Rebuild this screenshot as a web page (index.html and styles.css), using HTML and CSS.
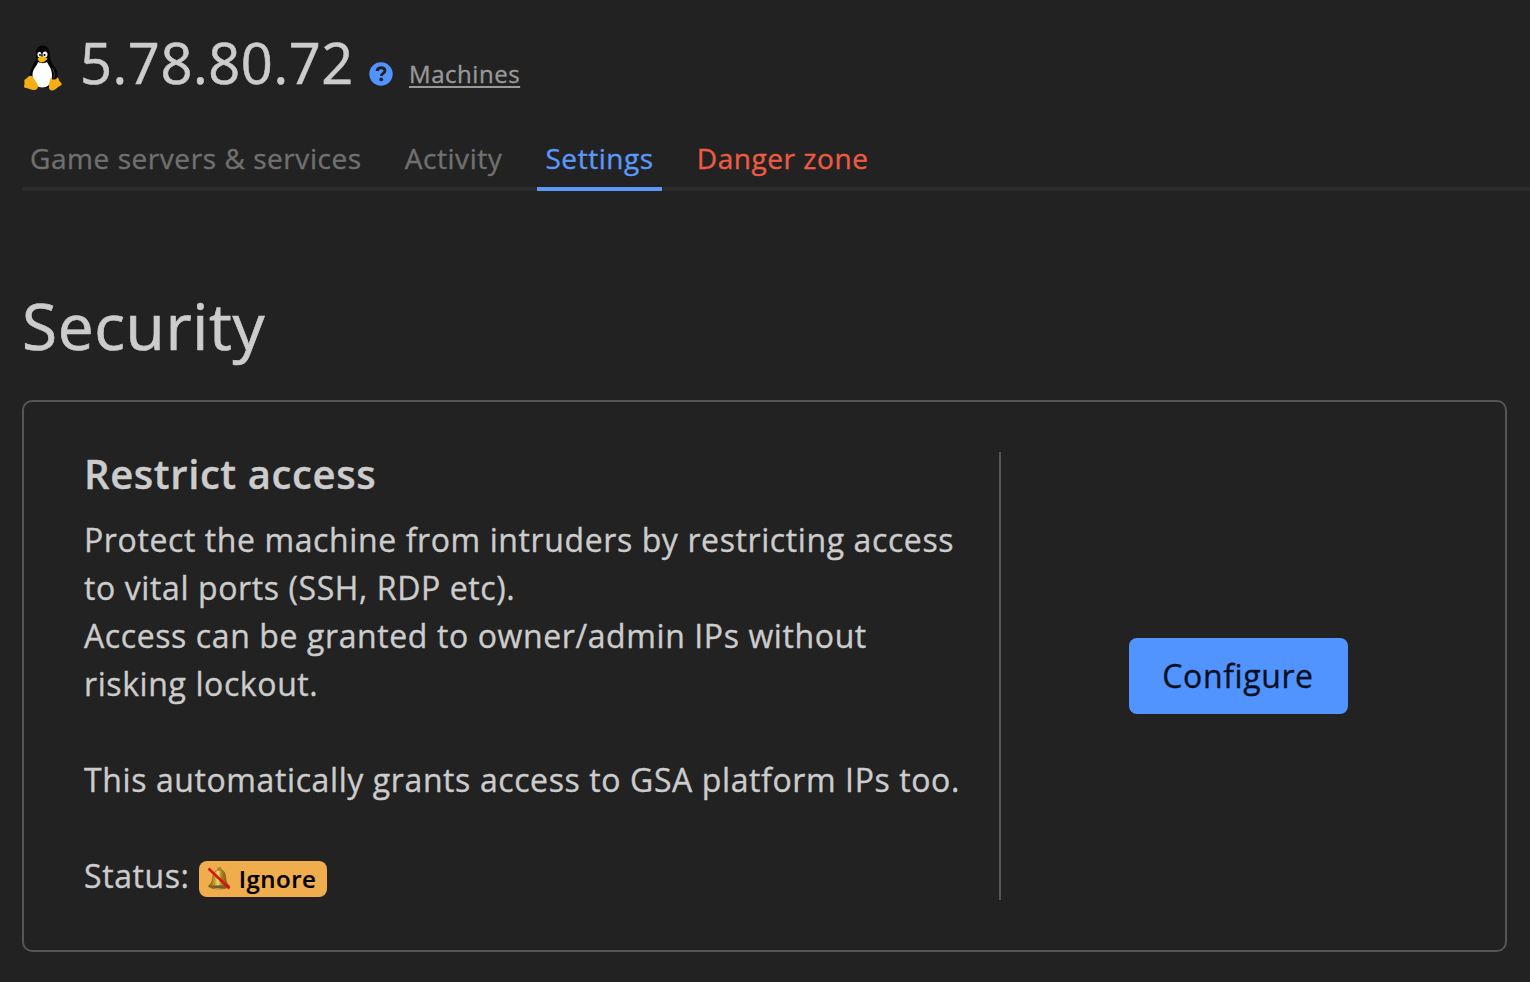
FILE: index.html
```html
<!DOCTYPE html>
<html lang="en"><head><meta charset="utf-8"><title>Machine settings</title><link rel="stylesheet" href="styles.css"></head>
<body>
<header class="machine">
  <svg class="tux" viewBox="0 0 38 46">
    <path d="M19 .5c-4.500 0-6.800 3-6.800 7 0 5 .4 6.500-2.200 10.500C8 22 5.500 26 5.500 31c0 7 5 12 14 12s15-4 14.500-12c-.3-6-4-9-6.500-14-1.500-3-1.400-5-1.700-9C25.500 3.500 23 .5 19 .5z" fill="#060606"/>
    <path d="M14 17c-1 4-5.500 7-5.500 13 0 7 3 12.500 10 12.500S28 36 28 30c0-6-3-9-5-13-2 1.500-6.500 1.500-9 0z" fill="#fff"/>
    <ellipse cx="15.400" cy="9.500" rx="2" ry="2.700" fill="#eee"/><ellipse cx="21" cy="9.500" rx="2.500" ry="2.900" fill="#eee"/>
    <circle cx="16" cy="10" r=".9"/><circle cx="20.500" cy="10" r="1"/>
    <path d="M13.500 13.500c1.500-1.500 3-2.500 4.500-2.300 2 .2 4 1.200 5.500 2.300-1 2-4 4-6 4s-3.500-2-4-4z" fill="#f6b80f"/>
    <path d="M4.500 31.500c2-1.500 4-.5 5 1.500l4 6c1.500 3 0 6-3.500 6-3 0-6-2-9-2.300-1.500-.2-.8-2-.5-4 .1-2-.8-3.500.5-4.300 1.200-.7 2.500-1.700 3.500-2.900z" fill="#f5ae16"/>
    <path d="M27 33c1 2 5 2.500 6.500-.7 1.500.7 1 3 2.500 4.500 2 2 2.500 2.700 0 4.200-3 1.500-5 4.500-8 4.500-2.500 0-3.500-2-3-5 .4-3 .5-6 2-7.500z" fill="#f5ae16"/>
    <path d="M28.500 23c2 4 2.500 7 1 10" fill="none" stroke="#444" stroke-width="1"/>
  </svg>
  <h1 class="machine-name">5.78.80.72</h1>
  <svg class="help" viewBox="0 0 24 24"><circle cx="12" cy="12" r="11.700" fill="#5294ff"/><path d="M8 9c.4-2.300 2-3.300 4.100-3.300 2.300 0 3.900 1.200 3.900 3.100 0 2.600-3.700 2.500-3.700 5.200" fill="none" stroke="#222" stroke-width="2.900"/><circle cx="12.200" cy="17.400" r="1.900" fill="#222"/></svg>
  <a class="crumb" href="#">Machines</a>
</header>
<nav class="tabs">
  <a class="tab" href="#">Game servers &amp; services</a>
  <a class="tab" href="#">Activity</a>
  <a class="tab tab-active" href="#">Settings</a>
  <a class="tab tab-danger" href="#">Danger zone</a>
</nav>
<main class="content">
  <h2 class="section-title">Security</h2>
  <section class="card">
    <div class="card-text">
      <h3 class="card-title">Restrict access</h3>
      <p class="copy">Protect the machine from intruders by restricting access<br>to vital ports (SSH, RDP etc).<br>Access can be granted to owner/admin IPs without<br>risking lockout.</p>
      <p class="copy">This automatically grants access to GSA platform IPs too.</p>
      <p class="copy status">Status: <span class="badge"><svg class="bell" viewBox="0 0 24 26"><defs><linearGradient id="brass"><stop offset="0" stop-color="#70540f"/><stop offset=".3" stop-color="#c99d2b"/><stop offset=".45" stop-color="#f0d778"/><stop offset=".62" stop-color="#a87f1c"/><stop offset="1" stop-color="#65490c"/></linearGradient></defs><circle cx="12.500" cy="3.500" r="2.400" fill="#b18928"/><path d="M12.500 4C7.500 4 6 7.500 5.700 11.500 5.500 15.500 4 18 1.200 20.200 5 24 19 24 23 20.200 20 18 19 15.500 18.800 11.500 18.500 7.500 17.500 4 12.500 4z" fill="url(#brass)" stroke="#80601a" stroke-width=".6"/><ellipse cx="12" cy="20.800" rx="8.500" ry="1.500" fill="#765b27"/><path d="M1.500 2.500L22.500 22.500" stroke="#d8120d" stroke-width="2.500"/></svg>Ignore</span></p>
    </div>
    <div class="card-action"><button class="button" type="button">Configure</button></div>
  </section>
</main>
</body></html>
```
FILE: styles.css
```css
* { box-sizing: border-box; }
body { margin: 0; height: 982px; overflow: hidden; background: #222; color: #ccc; font: 400 32px/48px "Open Sans", sans-serif; letter-spacing: 0.6px; -webkit-text-stroke: .35px; }
h1, h2, h3, p { margin: 0; font-weight: inherit; }
.machine { display: flex; align-items: flex-start; height: 136px; padding: 45px 0 0 24px; }
.tux { width: 38px; height: 46px; }
.machine-name { margin: -23px 0 0 18px; width: 272px; font-size: 56px; line-height: 80px; letter-spacing: .56px; -webkit-text-stroke: .6px; }
.help { width: 24px; height: 24px; margin: 17px 0 0 17px; }
.crumb { margin: 11px 0 0 16px; font-size: 24px; line-height: 36px; letter-spacing: .54px; color: #999; text-decoration-thickness: 2px; text-underline-offset: 3px; }
.tabs { display: flex; gap: 27px; height: 55px; margin-left: 22px; box-shadow: inset 0 -4px #2b2b2b; }
.tab { padding: 0 8px; font-size: 28px; line-height: 45px; letter-spacing: .56px; color: #707070; text-decoration: none; }
.tab-active { color: #5c98fa; border-bottom: 4px solid #5c98fa; }
.tab-danger { color: #ed5b43; }
.content { padding: 87px 23px 0 22px; }
.section-title { font-size: 64px; line-height: 96px; letter-spacing: .64px; -webkit-text-stroke: .7px; }
.card { display: flex; height: 552px; margin-top: 26px; padding: 50px 30px 50px 60px; border: 2px solid #555; border-radius: 10px; }
.card-text { width: 917px; height: 448px; border-right: 2px solid #555; white-space: nowrap; }
.card-title { font-size: 40px; line-height: 44px; font-weight: 600; letter-spacing: .6px; margin-bottom: 20px; }
.copy + .copy { margin-top: 48px; }
.status { display: flex; gap: 9px; }
.badge { display: flex; align-items: center; gap: 8px; width: 128px; height: 36px; margin-top: 9px; padding: 0 8px; border-radius: 8px; background: #f0ad4e; color: #000; font-size: 24px; font-weight: 600; letter-spacing: .52px; -webkit-text-stroke: .2px; }
.bell { width: 24px; height: 26px; }
.card-action { flex: 1; display: flex; justify-content: center; align-items: center; }
.button { width: 219px; height: 76px; border: 0; border-radius: 8px; background: #5294ff; color: #07101e; font: inherit; letter-spacing: inherit; }
```
